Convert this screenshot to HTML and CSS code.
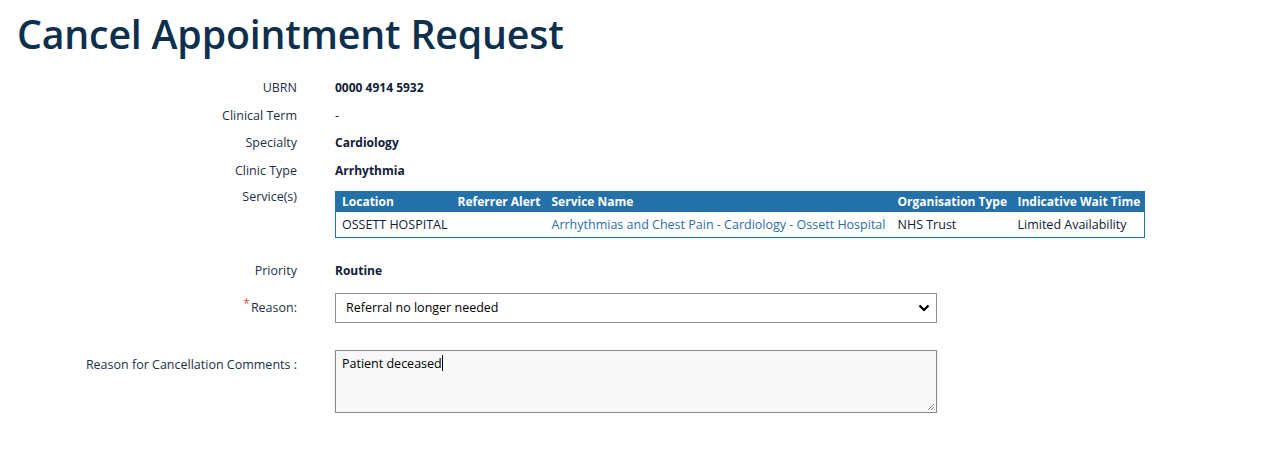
FILE: index.html
```html
<!DOCTYPE html>
<html lang="en">
<head>
<meta charset="utf-8">
<title>Cancel Appointment Request</title>
<link rel="stylesheet" href="styles.css">
</head>
<body>
<h1 class="title">Cancel Appointment Request</h1>
<div class="details">
  <div class="label">UBRN</div><div class="value strong">0000 4914 5932</div>
  <div class="label">Clinical Term</div><div class="value">-</div>
  <div class="label">Specialty</div><div class="value strong">Cardiology</div>
  <div class="label">Clinic Type</div><div class="value strong">Arrhythmia</div>
  <div class="label label-top">Service(s)</div>
  <div class="value value-table">
    <table class="services">
      <colgroup><col class="c1"><col class="c2"><col class="c3"><col class="c4"><col class="c5"></colgroup>
      <thead>
        <tr><th>Location</th><th>Referrer Alert</th><th>Service Name</th><th>Organisation Type</th><th>Indicative Wait Time</th></tr>
      </thead>
      <tbody>
        <tr><td>OSSETT HOSPITAL</td><td></td><td><a class="link" href="#">Arrhythmias and Chest Pain - Cardiology - Ossett Hospital</a></td><td>NHS Trust</td><td>Limited Availability</td></tr>
      </tbody>
    </table>
  </div>
  <div class="label priority-label">Priority</div><div class="value strong priority-value">Routine</div>
  <div class="label reason-label"><span class="req">*</span>Reason:</div>
  <div class="value reason-value">
    <div class="select">
      <span>Referral no longer needed</span>
      <svg class="chev" width="12" height="8" viewBox="0 0 12 8"><path d="M1.5 1.5 L6 6 L10.5 1.5" fill="none" stroke="#000" stroke-width="2.2"/></svg>
    </div>
  </div>
  <div class="label comments-label">Reason for Cancellation Comments :</div>
  <div class="value comments-value">
    <div class="textarea"><span>Patient deceased</span><span class="caret"></span>
      <svg class="grip" width="9" height="9" viewBox="0 0 9 9"><path d="M8 2 L2 8 M8 5 L5 8" stroke="#888" stroke-width="1"/></svg>
    </div>
  </div>
</div>
</body>
</html>
```
FILE: styles.css
```css
body {
  margin: 0;
  padding: 0 8px;
  font-family: "Open Sans", "Noto Sans", sans-serif;
  font-size: 12.5px;
  color: #1b2f45;
  background: #fff;
}
.title {
  margin: 0;
  padding: 10px 0 0 9px;
  font-size: 39.3px;
  font-weight: 600;
  color: #0e2f4e;
  line-height: 48px;
  letter-spacing: -0.2px;
}
.details {
  display: grid;
  grid-template-columns: 289px 1fr;
  column-gap: 38px;
  margin-top: 16px;
}
.label {
  text-align: right;
  height: 27.7px;
  line-height: 27.7px;
  color: #1b2f45;
}
.value {
  height: 27.7px;
  line-height: 27.7px;
  color: #0e2038;
}
.strong { font-weight: 700; font-size: 12px; }
.label-top { height: auto; line-height: 18px; padding-top: 3px; }
.value-table { height: auto; line-height: normal; padding-top: 6px; }
.services {
  border-collapse: collapse;
  border: 1px solid #2471a9;
  width: 809px;
  table-layout: fixed;
}
.c1 { width: 116px; }
.c2 { width: 94px; }
.c3 { width: 346px; }
.c4 { width: 120px; }
.c5 { width: 133px; }
.services th {
  background: #2471a9;
  color: #fff;
  font-weight: 700;
  font-size: 12px;
  text-align: left;
  padding: 0 6px;
  height: 20px;
  line-height: 20px;
  white-space: nowrap;
}
.services td {
  padding: 0 6px;
  height: 25px;
  line-height: 25px;
  color: #0e2038;
  white-space: nowrap;
}
.link { color: #2a6ea8; text-decoration: none; }
.priority-label, .priority-value { margin-top: 19px; }
.reason-label, .reason-value { margin-top: 9px; height: 30px; line-height: 30px; }
.req {
  position: relative;
  top: -4px;
  color: #d9534f;
  font-size: 12px;
  line-height: 0;
  margin-right: 1px;
}
.select {
  box-sizing: border-box;
  width: 602px;
  height: 30px;
  border: 1px solid #8c8c8c;
  background: #fff;
  display: flex;
  align-items: center;
  justify-content: space-between;
  padding: 0 6px 0 10px;
  font-size: 12.5px;
  color: #000;
}
.chev { display: block; }
.comments-label { margin-top: 27px; line-height: 29px; }
.comments-value { margin-top: 27px; height: auto; }
.textarea {
  position: relative;
  box-sizing: border-box;
  width: 602px;
  height: 63px;
  border: 1px solid #8c8c8c;
  background: #f8f8f8;
  box-shadow: 0 1px 2px rgba(0,0,0,0.15);
  padding: 4px 6px;
  line-height: 18px;
  font-size: 12.5px;
  color: #000;
}
.caret {
  display: inline-block;
  width: 1px;
  height: 16px;
  background: #000;
  vertical-align: -3px;
}
.grip { position: absolute; right: 1px; bottom: 1px; }
```
